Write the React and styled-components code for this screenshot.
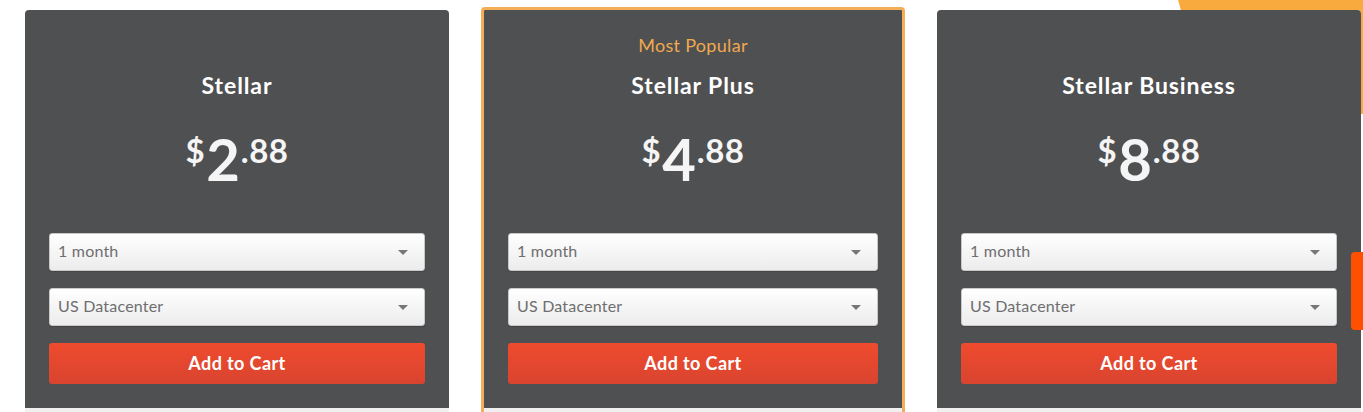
import styled, { createGlobalStyle } from "styled-components";

const GlobalStyle = createGlobalStyle`
	body {
		margin: 0;
		background: #fff;
		font-family: Lato, "Open Sans", sans-serif;
		overflow: hidden;
	}
`;

const plans = [
	{ name: "Stellar", dollars: "2", cents: "88" },
	{ name: "Stellar Plus", dollars: "4", cents: "88", popular: true },
	{ name: "Stellar Business", dollars: "8", cents: "88" },
];

const Caret = () => (
	<svg width="10" height="5" viewBox="0 0 10 5">
		<path d="M0 0h10L5 5z" fill="#777" />
	</svg>
);

const Select = ({ value }) => (
	<SelectBox>
		<span>{value}</span>
		<Caret />
	</SelectBox>
);

const App = () => {
	return (
		<Page>
			<GlobalStyle />
			<Blob />
			<Cards>
				{plans.map((plan) => (
					<Card key={plan.name} $popular={plan.popular}>
						<Top>
							<Label $show={plan.popular}>Most Popular</Label>
							<Title>{plan.name}</Title>
							<Price>
								<Small>$</Small>
								<Big>{plan.dollars}</Big>
								<Small>.{plan.cents}</Small>
							</Price>
							<Select value="1 month" />
							<Select value="US Datacenter" />
							<CartButton>Add to Cart</CartButton>
						</Top>
						<Features />
					</Card>
				))}
			</Cards>
			<SideTab />
		</Page>
	);
};

const Page = styled.div`
	position: relative;
	height: 412px;
	overflow: hidden;
`;

const Blob = styled.div`
	position: absolute;
	left: 1174px;
	top: -188px;
	width: 306px;
	height: 306px;
	border-radius: 50%;
	background: #f9aa3f;
`;

const SideTab = styled.div`
	position: absolute;
	right: 0;
	top: 252px;
	width: 12px;
	height: 78px;
	border-radius: 4px 0 0 4px;
	background: #ff5000;
`;

const Cards = styled.div`
	position: relative;
	display: flex;
	align-items: flex-start;
	gap: 32px;
	padding: 10px 0 0 25px;
`;

const Card = styled.div`
	box-sizing: border-box;
	width: 424px;
	flex-shrink: 0;
	border-radius: 4px 4px 0 0;
	overflow: hidden;
	border: ${(p) => (p.$popular ? "3px solid #f5ae58" : "none")};
	margin-top: ${(p) => (p.$popular ? "-3px" : "0")};
	background: #f0f0f0;
`;

const Top = styled.div`
	display: flex;
	flex-direction: column;
	align-items: stretch;
	padding: 25px 24px 24px;
	background: #4f5052;
	text-align: center;
`;

const Label = styled.div`
	height: 20px;
	line-height: 20px;
	font-size: 18px;
	font-weight: 400;
	letter-spacing: 0.3px;
	color: #f0a94e;
	visibility: ${(p) => (p.$show ? "visible" : "hidden")};
`;

const Title = styled.h2`
	margin: 17px 0 0;
	height: 26px;
	line-height: 26px;
	font-size: 23px;
	font-weight: 700;
	letter-spacing: 0.9px;
	color: #fff;
`;

const Price = styled.div`
	display: flex;
	justify-content: center;
	align-items: flex-start;
	margin: 32px 0 45px;
	height: 58px;
	color: #f5f5f5;
	font-weight: 700;
`;

const Big = styled.span`
	font-size: 58px;
	line-height: 1;
	margin: 0 1px;
`;

const Small = styled.span`
	font-size: 33px;
	line-height: 1;
	margin-top: 4px;
	letter-spacing: 0.5px;
`;

const SelectBox = styled.div`
	box-sizing: border-box;
	display: flex;
	align-items: center;
	justify-content: space-between;
	height: 38px;
	padding: 0 16px 3px 8px;
	margin-bottom: 17px;
	border: 1px solid #c9c9c9;
	border-radius: 3px;
	background: linear-gradient(#ffffff, #ececec);
	box-shadow: 0 1px 1px rgba(0, 0, 0, 0.15);
	color: #6e6e70;
	font-size: 16px;
	letter-spacing: 0.2px;
	text-align: left;
	svg {
		margin-top: 3px;
	}
`;

const CartButton = styled.button`
	height: 41px;
	padding-bottom: 2px;
	border: none;
	border-radius: 3px;
	background: linear-gradient(#ef4b2e, #d9442f);
	color: #fff;
	font-family: Lato, sans-serif;
	font-size: 18px;
	font-weight: 700;
	letter-spacing: 0.4px;
	cursor: pointer;
`;

const Features = styled.div`
	height: 40px;
`;

export default App;
